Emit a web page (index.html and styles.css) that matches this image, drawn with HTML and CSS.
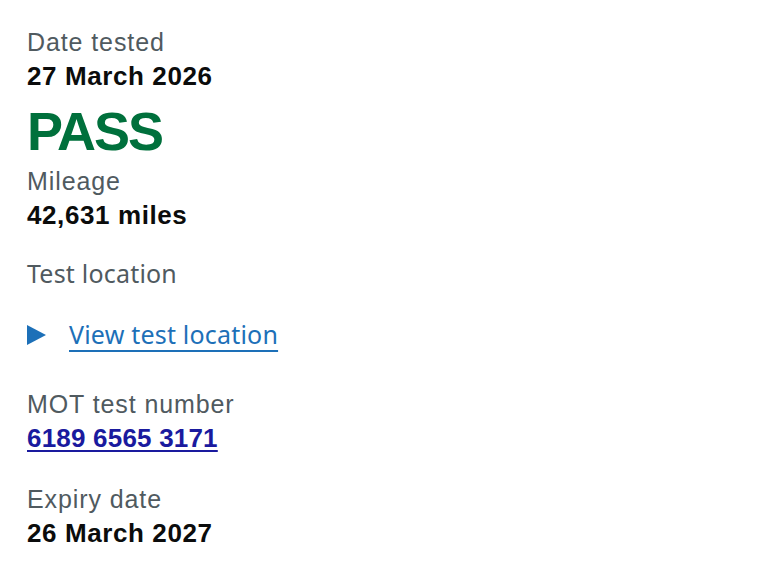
FILE: index.html
```html
<!DOCTYPE html>
<html lang="en">
<head>
<meta charset="utf-8">
<title>MOT result</title>
<link rel="stylesheet" href="styles.css">
</head>
<body>
<main class="result">
  <section class="item">
    <p class="label">Date tested</p>
    <p class="value">27 March 2026</p>
  </section>
  <p class="status">PASS</p>
  <section class="item">
    <p class="label">Mileage</p>
    <p class="value">42,631 miles</p>
  </section>
  <section class="item item-location">
    <p class="label label-alt">Test location</p>
    <div class="details">
      <svg class="arrow" width="19" height="20" viewBox="0 0 19 20" aria-hidden="true"><polygon points="0,0 19,10 0,20" fill="#1d70b8"/></svg>
      <a class="details-link" href="#">View test location</a>
    </div>
  </section>
  <section class="item item-number">
    <p class="label">MOT test number</p>
    <p class="value"><a class="number-link" href="#">6189 6565 3171</a></p>
  </section>
  <section class="item item-expiry">
    <p class="label">Expiry date</p>
    <p class="value">26 March 2027</p>
  </section>
</main>
</body>
</html>
```

FILE: styles.css
```css
html, body {
  margin: 0;
  padding: 0;
  background: #ffffff;
}

body {
  font-family: "Liberation Sans", Arial, sans-serif;
  color: #0b0c0c;
}

.result {
  display: flex;
  flex-direction: column;
  padding: 26px 27px 0 27px;
}

.item {
  display: flex;
  flex-direction: column;
}

.label,
.value {
  margin: 0;
  line-height: 32px;
}

.label {
  font-size: 25px;
  color: #505a5f;
  letter-spacing: 0.9px;
}

.label-alt {
  font-family: "Noto Sans", sans-serif;
  letter-spacing: 0.2px;
}

.value {
  margin-top: 2px;
  font-size: 26px;
  font-weight: 700;
  color: #0b0c0c;
  letter-spacing: 0.6px;
}

.status {
  margin: 9px 0 4px 0;
  font-size: 54px;
  line-height: 60px;
  font-weight: 700;
  color: #00703c;
  letter-spacing: -2px;
}

.item-location {
  margin-top: 26px;
}

.details {
  display: flex;
  align-items: center;
  gap: 23px;
  margin-top: 29px;
  height: 32px;
}

.arrow {
  flex: none;
  margin-top: 1px;
}

.details-link {
  font-family: "Noto Sans", sans-serif;
  font-size: 25px;
  line-height: 32px;
  color: #1d70b8;
  text-decoration: underline;
  text-decoration-thickness: 2px;
  text-underline-offset: 6px;
  letter-spacing: 0.2px;
}

.item-number {
  margin-top: 38px;
}

.number-link {
  color: #1a1a9e;
  letter-spacing: 0.2px;
  text-decoration: underline;
  text-decoration-thickness: 2px;
  text-underline-offset: 3px;
}

.item-expiry {
  margin-top: 29px;
}
```
